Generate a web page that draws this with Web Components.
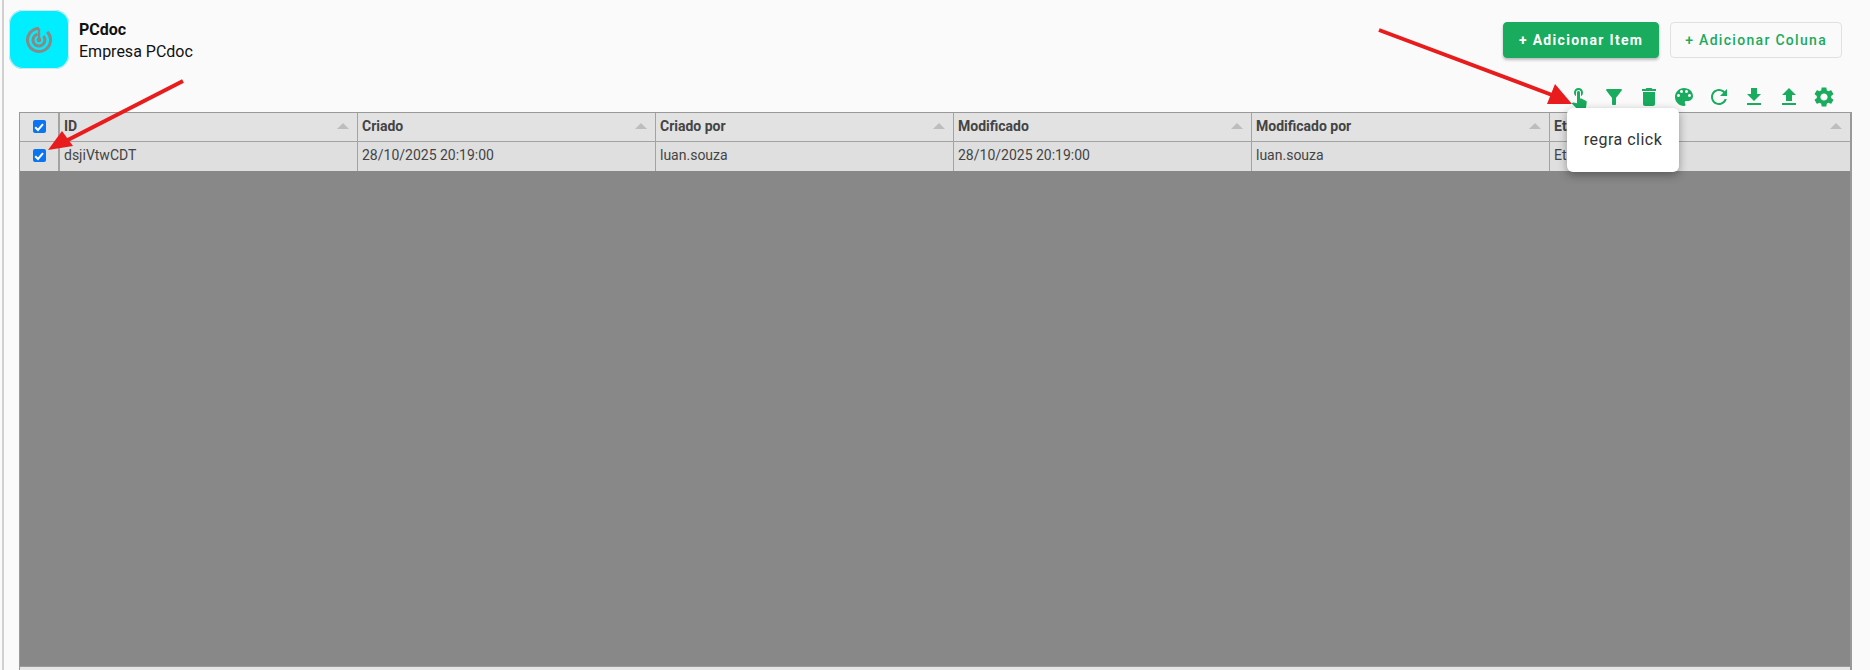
<!DOCTYPE html>
<html lang="pt">
<head>
<meta charset="utf-8">
<title>PCdoc</title>
<style>
  html, body { margin: 0; height: 670px; overflow: hidden; background: #fafafa; font-family: Roboto, "Liberation Sans", sans-serif; }
</style>
</head>
<body>
<doc-page>
  <brand-header slot="brand" title-text="PCdoc" subtitle="Empresa PCdoc"></brand-header>
  <action-button slot="actions" primary>+ Adicionar Item</action-button>
  <action-button slot="actions">+ Adicionar Coluna</action-button>
  <tool-bar slot="tools"></tool-bar>
  <data-grid slot="grid"></data-grid>
</doc-page>

<script>
  const ICONS = {
    touch: 'M9 11.24V7.5C9 6.12 10.12 5 11.5 5S14 6.12 14 7.5v3.74c1.21-.81 2-2.18 2-3.74C16 5.01 13.99 3 11.5 3S7 5.01 7 7.5c0 1.56.79 2.93 2 3.74zm9.84 4.63l-4.54-2.26c-.17-.07-.35-.11-.54-.11H13v-6c0-.83-.67-1.5-1.5-1.5S10 6.67 10 7.5v10.74l-3.43-.72c-.08-.01-.15-.03-.24-.03-.31 0-.59.13-.79.33l-.79.8 4.94 4.94c.27.27.65.44 1.06.44h6.79c.75 0 1.33-.55 1.44-1.28l.75-5.27c.01-.07.02-.14.02-.2 0-.62-.38-1.16-.91-1.38z',
    filter: 'M4.25 5.61C6.27 8.2 10 13 10 13v6c0 .55.45 1 1 1h2c.55 0 1-.45 1-1v-6s3.72-4.8 5.74-7.39c.51-.66.04-1.61-.79-1.61H5.04c-.83 0-1.3.95-.79 1.61z',
    trash: 'M6 19c0 1.1.9 2 2 2h8c1.1 0 2-.9 2-2V7H6v12zM19 4h-3.5l-1-1h-5l-1 1H5v2h14V4z',
    palette: 'M12 3c-4.97 0-9 4.03-9 9s4.03 9 9 9c.83 0 1.5-.67 1.5-1.5 0-.39-.15-.74-.39-1.01-.23-.26-.38-.61-.38-.99 0-.83.67-1.5 1.5-1.5H16c2.76 0 5-2.24 5-5 0-4.42-4.03-8-9-8zm-5.5 9c-.83 0-1.5-.67-1.5-1.5S5.67 9 6.5 9 8 9.67 8 10.5 7.33 12 6.5 12zm3-4C8.67 8 8 7.33 8 6.5S8.67 5 9.5 5s1.5.67 1.5 1.5S10.33 8 9.5 8zm5 0c-.83 0-1.5-.67-1.5-1.5S13.67 5 14.5 5s1.5.67 1.5 1.5S15.33 8 14.5 8zm3 4c-.83 0-1.5-.67-1.5-1.5S16.67 9 17.5 9s1.5.67 1.5 1.5-.67 1.5-1.5 1.5z',
    refresh: 'M17.65 6.35C16.2 4.9 14.21 4 12 4c-4.42 0-7.99 3.58-7.99 8s3.57 8 7.99 8c3.73 0 6.84-2.55 7.73-6h-2.08c-.82 2.33-3.04 4-5.65 4-3.31 0-6-2.69-6-6s2.69-6 6-6c1.66 0 3.14.69 4.22 1.78L13 11h7V4l-2.35 2.35z',
    download: 'M19 9h-4V3H9v6H5l7 7 7-7zM5 18v2h14v-2H5z',
    upload: 'M9 16h6v-6h4l-7-7-7 7h4zm-4 2h14v2H5z',
    gear: 'M19.14 12.94c.04-.3.06-.61.06-.94 0-.32-.02-.64-.07-.94l2.03-1.58c.18-.14.23-.41.12-.61l-1.92-3.32c-.12-.22-.37-.29-.59-.22l-2.39.96c-.5-.38-1.03-.7-1.62-.94l-.36-2.54c-.04-.24-.24-.41-.48-.41h-3.84c-.24 0-.43.17-.47.41l-.36 2.54c-.59.24-1.13.57-1.62.94l-2.39-.96c-.22-.08-.47 0-.59.22L2.74 8.87c-.12.21-.08.47.12.61l2.03 1.58c-.05.3-.09.63-.09.94s.02.64.07.94l-2.03 1.58c-.18.14-.23.41-.12.61l1.92 3.32c.12.22.37.29.59.22l2.39-.96c.5.38 1.03.7 1.62.94l.36 2.54c.05.24.24.41.48.41h3.84c.24 0 .44-.17.47-.41l.36-2.54c.59-.24 1.13-.56 1.62-.94l2.39.96c.22.08.47 0 .59-.22l1.92-3.32c.12-.22.07-.47-.12-.61l-2.01-1.58zM12 15.6c-1.98 0-3.6-1.62-3.6-3.6s1.62-3.6 3.6-3.6 3.6 1.62 3.6 3.6-1.62 3.6-3.6 3.6z'
  };

  class DocPage extends HTMLElement {
    connectedCallback() {
      this.attachShadow({ mode: 'open' });
      this.shadowRoot.innerHTML = `
        <style>
          :host { display: block; position: relative; height: 670px; margin-left: 2px; border-left: 2px solid #d0d0d0; box-sizing: border-box; padding: 10px 18px 0 5px; }
          header { display: flex; justify-content: space-between; height: 59px; }
          .actions { display: flex; gap: 11px; padding-top: 12px; align-items: flex-start; margin-right: 10px; }
          .tools { display: flex; justify-content: flex-end; height: 43px; }
          .grid { margin-left: 10px; }
          svg { position: absolute; left: -4px; top: 0; pointer-events: none; z-index: 5; }
        </style>
        <header>
          <slot name="brand"></slot>
          <div class="actions"><slot name="actions"></slot></div>
        </header>
        <div class="tools"><slot name="tools"></slot></div>
        <div class="grid"><slot name="grid"></slot></div>
        <svg width="1870" height="670" fill="#e81c1c">
          <line x1="183" y1="81" x2="60" y2="144" stroke="#e81c1c" stroke-width="4"/>
          <polygon points="48,150 62,131 73,146"/>
          <line x1="1379" y1="30" x2="1560" y2="98" stroke="#e81c1c" stroke-width="4"/>
          <polygon points="1572,104 1547,104 1555,84"/>
        </svg>`;
    }
  }
  customElements.define('doc-page', DocPage);

  class BrandHeader extends HTMLElement {
    connectedCallback() {
      this.attachShadow({ mode: 'open' });
      this.shadowRoot.innerHTML = `
        <style>
          :host { display: flex; gap: 10px; color: #111; }
          .logo { width: 60px; height: 59px; border-radius: 14px; background: #00eeff; box-shadow: 0 0 0 1px #d4e8ec inset; display: flex; align-items: center; justify-content: center; }
          .text { padding-top: 10px; }
          .name { font-weight: 700; font-size: 16px; line-height: 20px; }
          .sub { font-size: 16px; line-height: 23px; }
        </style>
        <div class="logo">
          <svg width="28" height="28" viewBox="0 0 28 28" fill="none" stroke="#8a8a84" stroke-width="3">
            <path d="M14 2.5 A11.5 11.5 0 1 0 22.2 5.9"/>
            <path d="M12.5 8.2 A6 6 0 1 0 18.4 10"/>
            <path d="M14 2.5 V14" stroke-width="2.4"/>
            <circle cx="14" cy="14" r="2.4" fill="#8a8a84" stroke="none"/>
          </svg>
        </div>
        <div class="text">
          <div class="name">${this.getAttribute('title-text')}</div>
          <div class="sub">${this.getAttribute('subtitle')}</div>
        </div>`;
    }
  }
  customElements.define('brand-header', BrandHeader);

  class ActionButton extends HTMLElement {
    connectedCallback() {
      this.attachShadow({ mode: 'open' });
      this.shadowRoot.innerHTML = `
        <style>
          :host { display: flex; align-items: center; justify-content: center; height: 36px; box-sizing: border-box; padding: 0 14px; border-radius: 4px; font-size: 14px; font-weight: 500; letter-spacing: 1.3px; color: #19ab5e; background: #fafafa; border: 1px solid #e0e0e0; }
          :host([primary]) { padding: 0 15px; color: #fff; background: #19ab5e; border-color: #19ab5e; font-weight: 700; box-shadow: 0 2px 3px rgba(0,0,0,.25); }
        </style>
        <slot></slot>`;
    }
  }
  customElements.define('action-button', ActionButton);

  class ToolBar extends HTMLElement {
    connectedCallback() {
      this.attachShadow({ mode: 'open' });
      const names = ['touch', 'filter', 'trash', 'palette', 'refresh', 'download', 'upload', 'gear'];
      this.shadowRoot.innerHTML = `
        <style>
          :host { display: flex; gap: 11px; position: relative; padding: 16px 16px 0 0; }
          svg { width: 24px; height: 24px; fill: #19ab5e; display: block; }
          .tip { position: absolute; left: 0; top: 39px; width: 112px; height: 64px; box-sizing: border-box; padding-bottom: 1px; background: #fff; border-radius: 6px; box-shadow: 0 3px 10px rgba(0,0,0,.35); z-index: 3; display: flex; align-items: center; justify-content: center; font-size: 16px; letter-spacing: .5px; color: #333; }
        </style>
        ${names.map(n => `<svg viewBox="0 0 24 24"><path d="${ICONS[n]}"/></svg>`).join('')}
        <div class="tip">regra click</div>`;
    }
  }
  customElements.define('tool-bar', ToolBar);

  class DataGrid extends HTMLElement {
    connectedCallback() {
      this.attachShadow({ mode: 'open' });
      const heads = ['ID', 'Criado', 'Criado por', 'Modificado', 'Modificado por', 'Etapa'];
      const row = ['dsjiVtwCDT', '28/10/2025 20:19:00', 'luan.souza', '28/10/2025 20:19:00', 'luan.souza', 'Etapa 1'];
      const box = `<span class="check"><svg width="12" height="12" viewBox="0 0 12 12"><path d="M2.2 6.2 L5 9 L10 3.2" fill="none" stroke="#fff" stroke-width="2"/></svg></span>`;
      this.shadowRoot.innerHTML = `
        <style>
          :host { display: block; width: 1833px; height: 560px; box-sizing: border-box; border: 1px solid #999; border-bottom: 0; border-right-width: 2px; background: #e6e6e6; font-size: 14px; color: #444; }
          .row { display: grid; grid-template-columns: 40px repeat(5, 298px) 1fr; height: 29px; box-sizing: border-box; background: #e2e2e2; border-bottom: 1px solid #a3a3a3; }
          .row + .row { background: #dfdfdf; border-bottom: 0; }
          .cell { display: flex; align-items: center; justify-content: space-between; box-sizing: border-box; padding: 0 5px 2px 4px; border-right: 1px solid #a3a3a3; white-space: nowrap; overflow: hidden; }
          .row + .row .cell { padding-bottom: 4px; }
          .cell:last-child { border-right: 0; }
          .cell.sel { justify-content: center; border-right: 2px solid #a3a3a3; padding: 0 0 1px; }
          .row + .row .cell.sel { padding-bottom: 2px; }
          .head { font-weight: 700; }
          .head i { width: 0; height: 0; border: 6px solid transparent; border-top: 0; border-bottom: 6px solid #bdbdbd; margin-right: 3px; }
          .check { width: 13px; height: 13px; border-radius: 2px; background: #0b74f0; display: flex; align-items: center; justify-content: center; }
          .dim { height: 495px; background: #888; border-bottom: 1px solid #9a9a9a; }
        </style>
        <div class="row">
          <div class="cell sel">${box}</div>
          ${heads.map(h => `<div class="cell head"><span>${h}</span><i></i></div>`).join('')}
        </div>
        <div class="row">
          <div class="cell sel">${box}</div>
          ${row.map(v => `<div class="cell"><span>${v}</span></div>`).join('')}
        </div>
        <div class="dim"></div>`;
    }
  }
  customElements.define('data-grid', DataGrid);
</script>
</body>
</html>
